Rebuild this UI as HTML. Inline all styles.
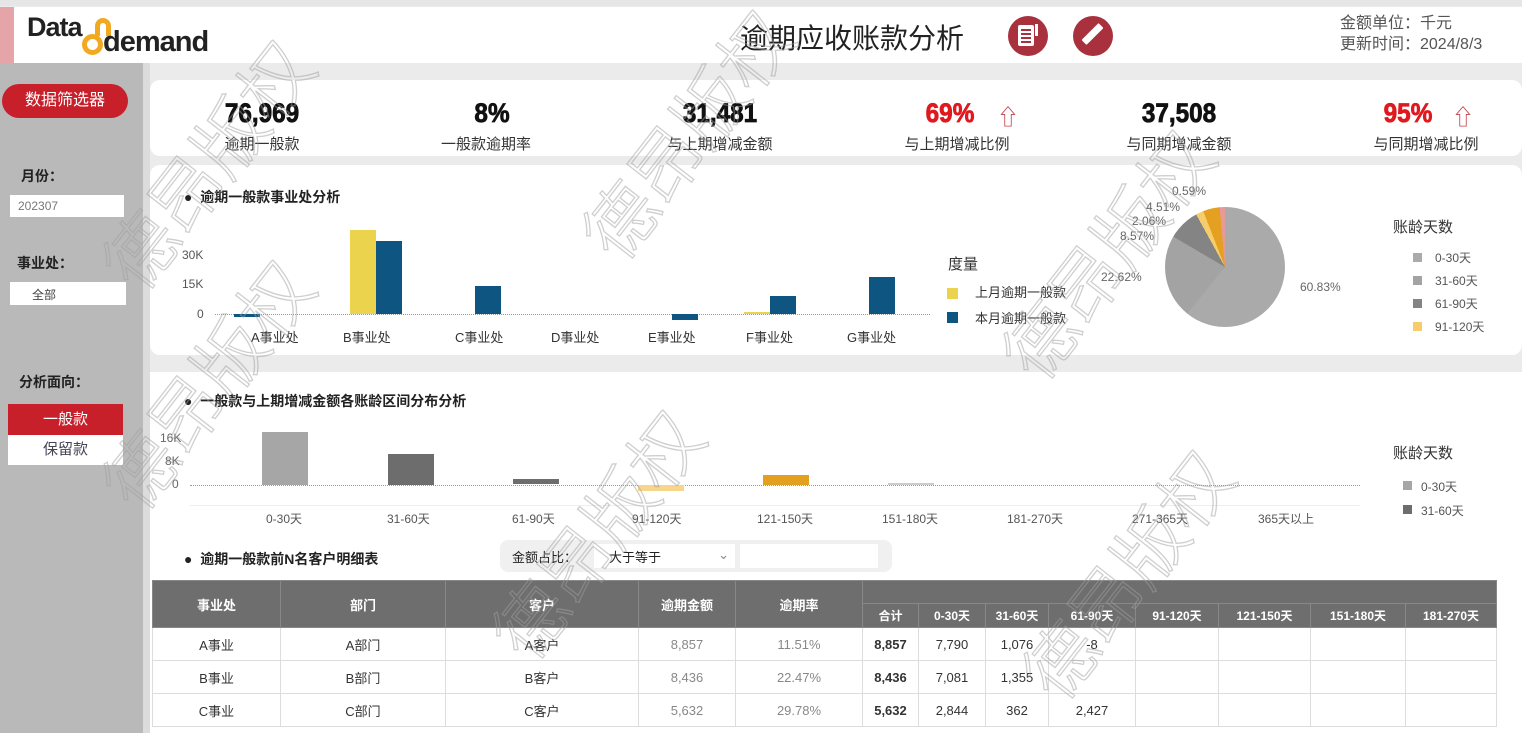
<!DOCTYPE html>
<html><head><meta charset="utf-8"><style>
*{margin:0;padding:0;box-sizing:border-box}
body{width:1522px;height:733px;overflow:hidden;background:#ebebeb;font-family:"Liberation Sans","Noto Sans CJK SC",sans-serif;position:relative;color:#222}
.a{position:absolute}
.t{position:absolute;white-space:nowrap}
.wm{position:absolute;font-size:72px;color:rgba(255,255,255,0);-webkit-text-stroke:1.3px rgba(160,160,160,.5);transform:rotate(-52deg);white-space:nowrap;font-family:"Noto Sans CJK SC",sans-serif;font-weight:300}
.kv{position:absolute;font-size:27px;font-weight:900;transform:scaleX(.9);text-align:center;width:200px;font-family:"Liberation Sans",sans-serif;color:#111;-webkit-text-stroke:0.8px currentColor}
.kl{position:absolute;font-size:15px;text-align:center;width:200px;color:#333}
table{border-collapse:collapse;position:absolute;left:152px;top:580px;width:1345px;font-size:13px}
td,th{border:1px solid #ddd;text-align:center}
th{background:#6e6e6e;color:#fff;font-weight:bold;border-color:#888}
td{height:33px;color:#333;background:#fff}
td.g{color:#888}
</style></head><body>
<div class="a" style="left:0;top:0;width:1522px;height:6px;background:#e6e6e6"></div>
<div class="a" style="left:0;top:7px;width:1522px;height:56px;background:#fff"></div>
<div class="a" style="left:0;top:7px;width:14px;height:56px;background:#e5a5a8"></div>
<div class="t" style="left:27px;top:12px;font-size:27px;font-weight:bold;letter-spacing:-1px">Data</div>
<div class="a" style="left:82px;top:34px;width:21px;height:21px;border:5px solid #f2a922;border-radius:50%"></div>
<div class="a" style="left:95px;top:18px;width:16px;height:18px;border:5px solid #f2a922;border-bottom:none;border-radius:9px 9px 0 0"></div>
<div class="t" style="left:103px;top:26px;font-size:29px;font-weight:bold;letter-spacing:-1px">demand</div>
<div class="t" style="left:740px;top:17px;font-size:28px;color:#222">逾期应收账款分析</div>
<div class="a" style="left:1008px;top:16px;width:40px;height:40px;border-radius:50%;background:#a8313d"></div>
<div class="a" style="left:1018px;top:25px;width:16px;height:21px;background:#fff;border-radius:2px"></div>
<div class="a" style="left:1021px;top:29px;width:10px;height:2px;background:#a8313d;box-shadow:0 4px 0 #a8313d,0 8px 0 #a8313d,0 12px 0 #a8313d"></div>
<div class="a" style="left:1035px;top:24px;width:3px;height:12px;background:#fff"></div>
<div class="a" style="left:1073px;top:16px;width:40px;height:40px;border-radius:50%;background:#a8313d"></div>
<div class="a" style="left:1089px;top:22px;width:7px;height:24px;background:#fff;transform:rotate(45deg);border-radius:1px"></div>
<div class="t" style="left:1340px;top:13px;font-size:16px;color:#555;line-height:21px">金额单位：千元<br>更新时间：2024/8/3</div>
<div class="a" style="left:0;top:63px;width:143px;height:670px;background:#b9b9b9"></div>
<div class="a" style="left:143px;top:63px;width:7px;height:670px;background:#dcdcdc"></div>
<div class="a" style="left:2px;top:84px;width:126px;height:34px;border-radius:17px;background:#c8202b;color:#fff;font-size:16px;text-align:center;line-height:34px">数据筛选器</div>
<div class="t" style="left:21px;top:166px;font-size:14px;font-weight:bold">月份：</div>
<div class="a" style="left:10px;top:195px;width:114px;height:22px;background:#fff;font-size:12px;color:#777;padding:4px 0 0 8px">202307</div>
<div class="t" style="left:17px;top:253px;font-size:14px;font-weight:bold">事业处：</div>
<div class="a" style="left:10px;top:282px;width:116px;height:23px;background:#fff;font-size:12px;color:#444;padding:4px 0 0 22px">全部</div>
<div class="t" style="left:19px;top:372px;font-size:14px;font-weight:bold">分析面向：</div>
<div class="a" style="left:8px;top:404px;width:115px;height:31px;background:#c8202b;color:#fff;font-size:15px;text-align:center;line-height:31px">一般款</div>
<div class="a" style="left:8px;top:435px;width:115px;height:30px;background:#fff;color:#445;font-size:15px;text-align:center;line-height:30px">保留款</div>
<div class="a" style="left:150px;top:80px;width:1372px;height:76px;background:#fff;border-radius:10px"></div>
<div class="kv" style="left:162px;top:98px">76,969</div><div class="kl" style="left:162px;top:133px">逾期一般款</div>
<div class="kv" style="left:392px;top:98px">8%</div><div class="kl" style="left:386px;top:133px">一般款逾期率</div>
<div class="kv" style="left:620px;top:98px">31,481</div><div class="kl" style="left:620px;top:133px">与上期增减金额</div>
<div class="kv" style="left:850px;top:98px;color:#e0191f">69%</div><div class="t" style="left:997px;top:100px;font-size:22px;color:#c0404a">⇧</div><div class="kl" style="left:857px;top:133px">与上期增减比例</div>
<div class="kv" style="left:1079px;top:98px">37,508</div><div class="kl" style="left:1079px;top:133px">与同期增减金额</div>
<div class="kv" style="left:1308px;top:98px;color:#e0191f">95%</div><div class="t" style="left:1452px;top:100px;font-size:22px;color:#c0404a">⇧</div><div class="kl" style="left:1326px;top:133px">与同期增减比例</div>
<div class="a" style="left:150px;top:165px;width:1372px;height:190px;background:#fff;border-radius:10px"></div>
<div class="t" style="left:184px;top:187px;font-size:14px;font-weight:bold">●&nbsp; 逾期一般款事业处分析</div>
<div class="t" style="left:182px;top:248px;font-size:12px;color:#555">30K</div>
<div class="t" style="left:182px;top:277px;font-size:12px;color:#555">15K</div>
<div class="t" style="left:197px;top:307px;font-size:12px;color:#555">0</div>
<div class="a" style="left:215px;top:314px;width:715px;border-top:1px dotted #999"></div>
<div class="a" style="left:234px;top:314px;width:26px;height:3px;background:#0f5582"></div>
<div class="a" style="left:350px;top:230px;width:26px;height:84px;background:#ecd34e"></div>
<div class="a" style="left:376px;top:241px;width:26px;height:73px;background:#0f5582"></div>
<div class="a" style="left:475px;top:286px;width:26px;height:28px;background:#0f5582"></div>
<div class="a" style="left:672px;top:314px;width:26px;height:6px;background:#0f5582"></div>
<div class="a" style="left:744px;top:312px;width:26px;height:2px;background:#ecd34e"></div>
<div class="a" style="left:770px;top:296px;width:26px;height:18px;background:#0f5582"></div>
<div class="a" style="left:869px;top:277px;width:26px;height:37px;background:#0f5582"></div>
<div class="t" style="left:251px;top:327px;font-size:13px;color:#333">A事业处</div>
<div class="t" style="left:343px;top:327px;font-size:13px;color:#333">B事业处</div>
<div class="t" style="left:455px;top:327px;font-size:13px;color:#333">C事业处</div>
<div class="t" style="left:551px;top:327px;font-size:13px;color:#333">D事业处</div>
<div class="t" style="left:648px;top:327px;font-size:13px;color:#333">E事业处</div>
<div class="t" style="left:746px;top:327px;font-size:13px;color:#333">F事业处</div>
<div class="t" style="left:847px;top:327px;font-size:13px;color:#333">G事业处</div>
<div class="t" style="left:948px;top:253px;font-size:15px;color:#333">度量</div>
<div class="a" style="left:947px;top:288px;width:11px;height:11px;background:#ecd34e"></div>
<div class="t" style="left:975px;top:282px;font-size:13px;color:#333">上月逾期一般款</div>
<div class="a" style="left:947px;top:312px;width:11px;height:11px;background:#0f5582"></div>
<div class="t" style="left:975px;top:308px;font-size:13px;color:#333">本月逾期一般款</div>
<div class="a" style="left:1165px;top:207px;width:120px;height:120px;border-radius:50%;background:conic-gradient(#aaa 0 60.83%,#a3a3a3 60.83% 83.45%,#848484 83.45% 92.02%,#f6cd6b 92.02% 94.08%,#e4a020 94.08% 98.59%,#e79a9a 98.59% 100%)"></div>
<div class="t" style="left:1300px;top:280px;font-size:12px;color:#666">60.83%</div>
<div class="t" style="left:1101px;top:270px;font-size:12px;color:#666">22.62%</div>
<div class="t" style="left:1120px;top:229px;font-size:12px;color:#666">8.57%</div>
<div class="t" style="left:1132px;top:214px;font-size:12px;color:#666">2.06%</div>
<div class="t" style="left:1146px;top:200px;font-size:12px;color:#666">4.51%</div>
<div class="t" style="left:1172px;top:184px;font-size:12px;color:#666">0.59%</div>
<div class="t" style="left:1393px;top:216px;font-size:15px;color:#333">账龄天数</div>
<div class="a" style="left:1413px;top:253px;width:9px;height:9px;background:#aaa"></div><div class="t" style="left:1435px;top:249px;font-size:12px;color:#555">0-30天</div>
<div class="a" style="left:1413px;top:276px;width:9px;height:9px;background:#a3a3a3"></div><div class="t" style="left:1435px;top:272px;font-size:12px;color:#555">31-60天</div>
<div class="a" style="left:1413px;top:299px;width:9px;height:9px;background:#848484"></div><div class="t" style="left:1435px;top:295px;font-size:12px;color:#555">61-90天</div>
<div class="a" style="left:1413px;top:322px;width:9px;height:9px;background:#f6cd6b"></div><div class="t" style="left:1435px;top:318px;font-size:12px;color:#555">91-120天</div>
<div class="a" style="left:150px;top:372px;width:1372px;height:361px;background:#fff"></div>
<div class="t" style="left:184px;top:391px;font-size:14px;font-weight:bold">●&nbsp; 一般款与上期增减金额各账龄区间分布分析</div>
<div class="t" style="left:160px;top:431px;font-size:12px;color:#666">16K</div>
<div class="t" style="left:165px;top:454px;font-size:12px;color:#666">8K</div>
<div class="t" style="left:172px;top:477px;font-size:12px;color:#666">0</div>
<div class="a" style="left:190px;top:485px;width:1170px;border-top:1px dotted #999"></div>
<div class="a" style="left:190px;top:505px;width:1170px;border-top:1px solid #eee"></div>
<div class="a" style="left:262px;top:432px;width:46px;height:53px;background:#a6a6a6"></div>
<div class="a" style="left:388px;top:454px;width:46px;height:31px;background:#6d6d6d"></div>
<div class="a" style="left:513px;top:479px;width:46px;height:5px;background:#6d6d6d"></div>
<div class="a" style="left:638px;top:485px;width:46px;height:6px;background:#f7d58a"></div>
<div class="a" style="left:763px;top:475px;width:46px;height:10px;background:#e3a01f"></div>
<div class="a" style="left:888px;top:483px;width:46px;height:2px;background:#ccc"></div>
<div class="t" style="left:266px;top:510px;font-size:12px;color:#555">0-30天</div>
<div class="t" style="left:387px;top:510px;font-size:12px;color:#555">31-60天</div>
<div class="t" style="left:512px;top:510px;font-size:12px;color:#555">61-90天</div>
<div class="t" style="left:632px;top:510px;font-size:12px;color:#555">91-120天</div>
<div class="t" style="left:757px;top:510px;font-size:12px;color:#555">121-150天</div>
<div class="t" style="left:882px;top:510px;font-size:12px;color:#555">151-180天</div>
<div class="t" style="left:1007px;top:510px;font-size:12px;color:#555">181-270天</div>
<div class="t" style="left:1132px;top:510px;font-size:12px;color:#555">271-365天</div>
<div class="t" style="left:1258px;top:510px;font-size:12px;color:#555">365天以上</div>
<div class="t" style="left:1393px;top:442px;font-size:15px;color:#333">账龄天数</div>
<div class="a" style="left:1403px;top:481px;width:9px;height:9px;background:#a6a6a6"></div><div class="t" style="left:1421px;top:478px;font-size:12px;color:#555">0-30天</div>
<div class="a" style="left:1403px;top:505px;width:9px;height:9px;background:#6d6d6d"></div><div class="t" style="left:1421px;top:502px;font-size:12px;color:#555">31-60天</div>
<div class="t" style="left:184px;top:549px;font-size:14px;font-weight:bold">●&nbsp; 逾期一般款前N名客户明细表</div>
<div class="a" style="left:500px;top:540px;width:392px;height:32px;background:#f0f0f0;border-radius:8px"></div>
<div class="t" style="left:512px;top:547px;font-size:13px">金额占比：</div>
<div class="a" style="left:594px;top:544px;width:141px;height:24px;background:#fff;font-size:13px;padding:3px 0 0 15px">大于等于<span style="position:absolute;right:6px;color:#888">⌄</span></div>
<div class="a" style="left:740px;top:544px;width:138px;height:24px;background:#fff"></div>
<table>
<tr><th rowspan="2" style="width:128px;height:47px">事业处</th><th rowspan="2" style="width:165px">部门</th><th rowspan="2" style="width:193px">客户</th><th rowspan="2" style="width:97px">逾期金额</th><th rowspan="2" style="width:127px">逾期率</th><th colspan="8" style="height:23px"></th></tr>
<tr style="font-size:12px"><th style="width:56px">合计</th><th style="width:67px">0-30天</th><th style="width:63px">31-60天</th><th style="width:87px">61-90天</th><th style="width:83px">91-120天</th><th style="width:92px">121-150天</th><th style="width:95px">151-180天</th><th>181-270天</th></tr>
<tr><td>A事业</td><td>A部门</td><td>A客户</td><td class="g">8,857</td><td class="g">11.51%</td><td><b>8,857</b></td><td>7,790</td><td>1,076</td><td>-8</td><td></td><td></td><td></td><td></td></tr>
<tr><td>B事业</td><td>B部门</td><td>B客户</td><td class="g">8,436</td><td class="g">22.47%</td><td><b>8,436</b></td><td>7,081</td><td>1,355</td><td></td><td></td><td></td><td></td><td></td></tr>
<tr><td>C事业</td><td>C部门</td><td>C客户</td><td class="g">5,632</td><td class="g">29.78%</td><td><b>5,632</b></td><td>2,844</td><td>362</td><td>2,427</td><td></td><td></td><td></td><td></td></tr>
</table>
<div class="wm" style="left:60px;top:110px">德昂版权</div>
<div class="wm" style="left:540px;top:80px">德昂版权</div>
<div class="wm" style="left:960px;top:200px">德昂版权</div>
<div class="wm" style="left:60px;top:330px">德昂版权</div>
<div class="wm" style="left:450px;top:480px">德昂版权</div>
<div class="wm" style="left:980px;top:520px">德昂版权</div>
</body></html>
